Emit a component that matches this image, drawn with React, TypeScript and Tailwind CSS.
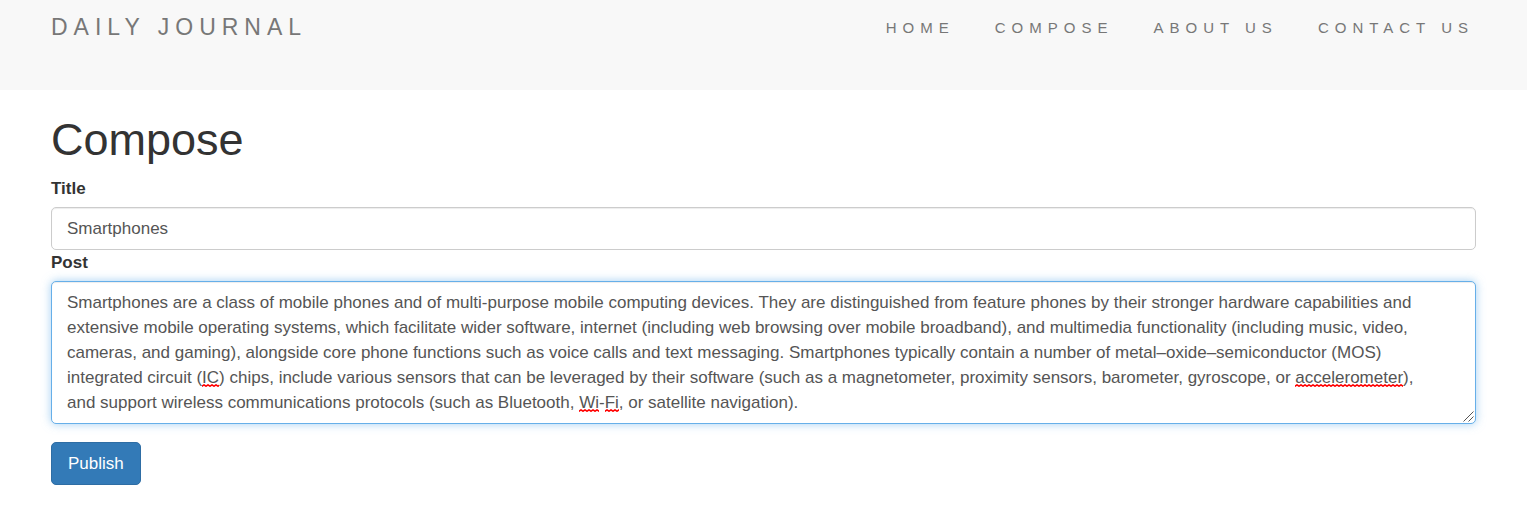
import { useLayoutEffect, useRef, useState } from "react";

const links = ["Home", "Compose", "About Us", "Contact Us"];

const initialPost =
  "Smartphones are a class of mobile phones and of multi-purpose mobile computing devices. They are distinguished from feature phones by their stronger hardware capabilities and extensive mobile operating systems, which facilitate wider software, internet (including web browsing over mobile broadband), and multimedia functionality (including music, video, cameras, and gaming), alongside core phone functions such as voice calls and text messaging. Smartphones typically contain a number of metal–oxide–semiconductor (MOS) integrated circuit (IC) chips, include various sensors that can be leveraged by their software (such as a magnetometer, proximity sensors, barometer, gyroscope, or accelerometer), and support wireless communications protocols (such as Bluetooth, Wi-Fi, or satellite navigation).";

const flaggedWords = /\b(?:IC|accelerometer|Wi|Fi)\b/g;

type Mark = { left: number; top: number; width: number };

// Lays the text out in a temporary copy of the box and returns where each flagged word ends up.
function findMarks(box: HTMLTextAreaElement, text: string): Mark[] {
  const copy = document.createElement("div");
  copy.className = box.className;
  copy.style.cssText = `position:absolute;visibility:hidden;white-space:pre-wrap;width:${box.offsetWidth}px`;
  copy.textContent = text;
  box.parentElement!.appendChild(copy);
  const origin = copy.getBoundingClientRect();
  const node = copy.firstChild;
  const marks: Mark[] = [];
  if (node) {
    for (const match of text.matchAll(flaggedWords)) {
      const range = document.createRange();
      range.setStart(node, match.index);
      range.setEnd(node, match.index + match[0].length);
      const rect = range.getBoundingClientRect();
      marks.push({
        left: Math.round(rect.left - origin.left),
        top: Math.round(rect.bottom - origin.top) - 3,
        width: Math.round(rect.width),
      });
    }
  }
  copy.remove();
  return marks;
}

function Squiggle({ left, top, width }: Mark) {
  return (
    <svg
      aria-hidden="true"
      className="pointer-events-none absolute h-[3px]"
      style={{ left, top, width }}
    >
      <defs>
        <pattern id="wave" width="4" height="3" patternUnits="userSpaceOnUse">
          <path d="M-1 1.5 L0 2.2 L2 0.9 L4 2.2 L5 1.5" fill="none" stroke="#ff0000" strokeWidth="1.6" />
        </pattern>
      </defs>
      <rect width="100%" height="3" fill="url(#wave)" />
    </svg>
  );
}

function PostEditor() {
  const [post, setPost] = useState(initialPost);
  const [marks, setMarks] = useState<Mark[]>([]);
  const box = useRef<HTMLTextAreaElement>(null);

  useLayoutEffect(() => {
    const element = box.current;
    if (!element) return;
    const update = () => setMarks(findMarks(element, post));
    update();
    const observer = new ResizeObserver(update);
    observer.observe(element);
    return () => observer.disconnect();
  }, [post]);

  return (
    <div className="relative w-full">
      <textarea
        ref={box}
        id="post"
        rows={5}
        spellCheck={false}
        value={post}
        onChange={(e) => setPost(e.target.value)}
        className="block h-[143px] w-full resize-none overflow-hidden rounded-[5px] border border-[#66afe9] bg-white py-2 pr-10 pl-[15px] text-[#555555] shadow-[inset_0_1px_1px_rgba(0,0,0,0.075),0_0_10px_rgba(102,175,233,0.6)] outline-none"
      />
      {marks.map((mark, i) => (
        <Squiggle key={i} {...mark} />
      ))}
      <svg
        aria-hidden="true"
        viewBox="0 0 11 11"
        className="pointer-events-none absolute right-[2px] bottom-[2px] size-[11px]"
      >
        <path d="M0.5 10.5 L10.5 0.5 M5.5 10.5 L10.5 5.5" fill="none" stroke="#555555" strokeWidth="1" />
      </svg>
    </div>
  );
}

function Header() {
  return (
    <header className="flex h-[90px] items-start justify-between bg-[#f8f8f8] pr-[53px] pl-[51px] text-[#777777]">
      <a href="#" className="pt-3 text-[23px] leading-[30px] tracking-[6px] uppercase">
        Daily Journal
      </a>
      <nav className="flex gap-10 pt-4">
        {links.map((label) => (
          <a key={label} href="#" className="text-[15px] leading-6 tracking-[6px] uppercase">
            {label}
          </a>
        ))}
      </nav>
    </header>
  );
}

export default function App() {
  const [title, setTitle] = useState("Smartphones");

  return (
    <div className="bg-white font-['Liberation_Sans',Arial,sans-serif] text-[17px] leading-[25px] text-[#333333]">
      <Header />
      <main className="px-[51px] pt-[25px] pb-7">
        <h1 className="text-[45px] leading-[50px]">Compose</h1>
        <form className="flex flex-col items-start pt-[11px]" onSubmit={(e) => e.preventDefault()}>
          <label htmlFor="title" className="mb-[6px] font-bold">
            Title
          </label>
          <input
            id="title"
            type="text"
            value={title}
            onChange={(e) => setTitle(e.target.value)}
            className="h-[43px] w-full rounded-[5px] border border-[#cccccc] bg-white px-[15px] text-[#555555] shadow-[inset_0_1px_1px_rgba(0,0,0,0.075)] outline-none"
          />
          <label htmlFor="post" className="mb-[6px] font-bold">
            Post
          </label>
          <PostEditor />
          <button
            type="submit"
            className="mt-[18px] h-[43px] rounded-[5px] border border-[#2e6da4] bg-[#337ab7] px-4 text-white"
          >
            Publish
          </button>
        </form>
      </main>
    </div>
  );
}
